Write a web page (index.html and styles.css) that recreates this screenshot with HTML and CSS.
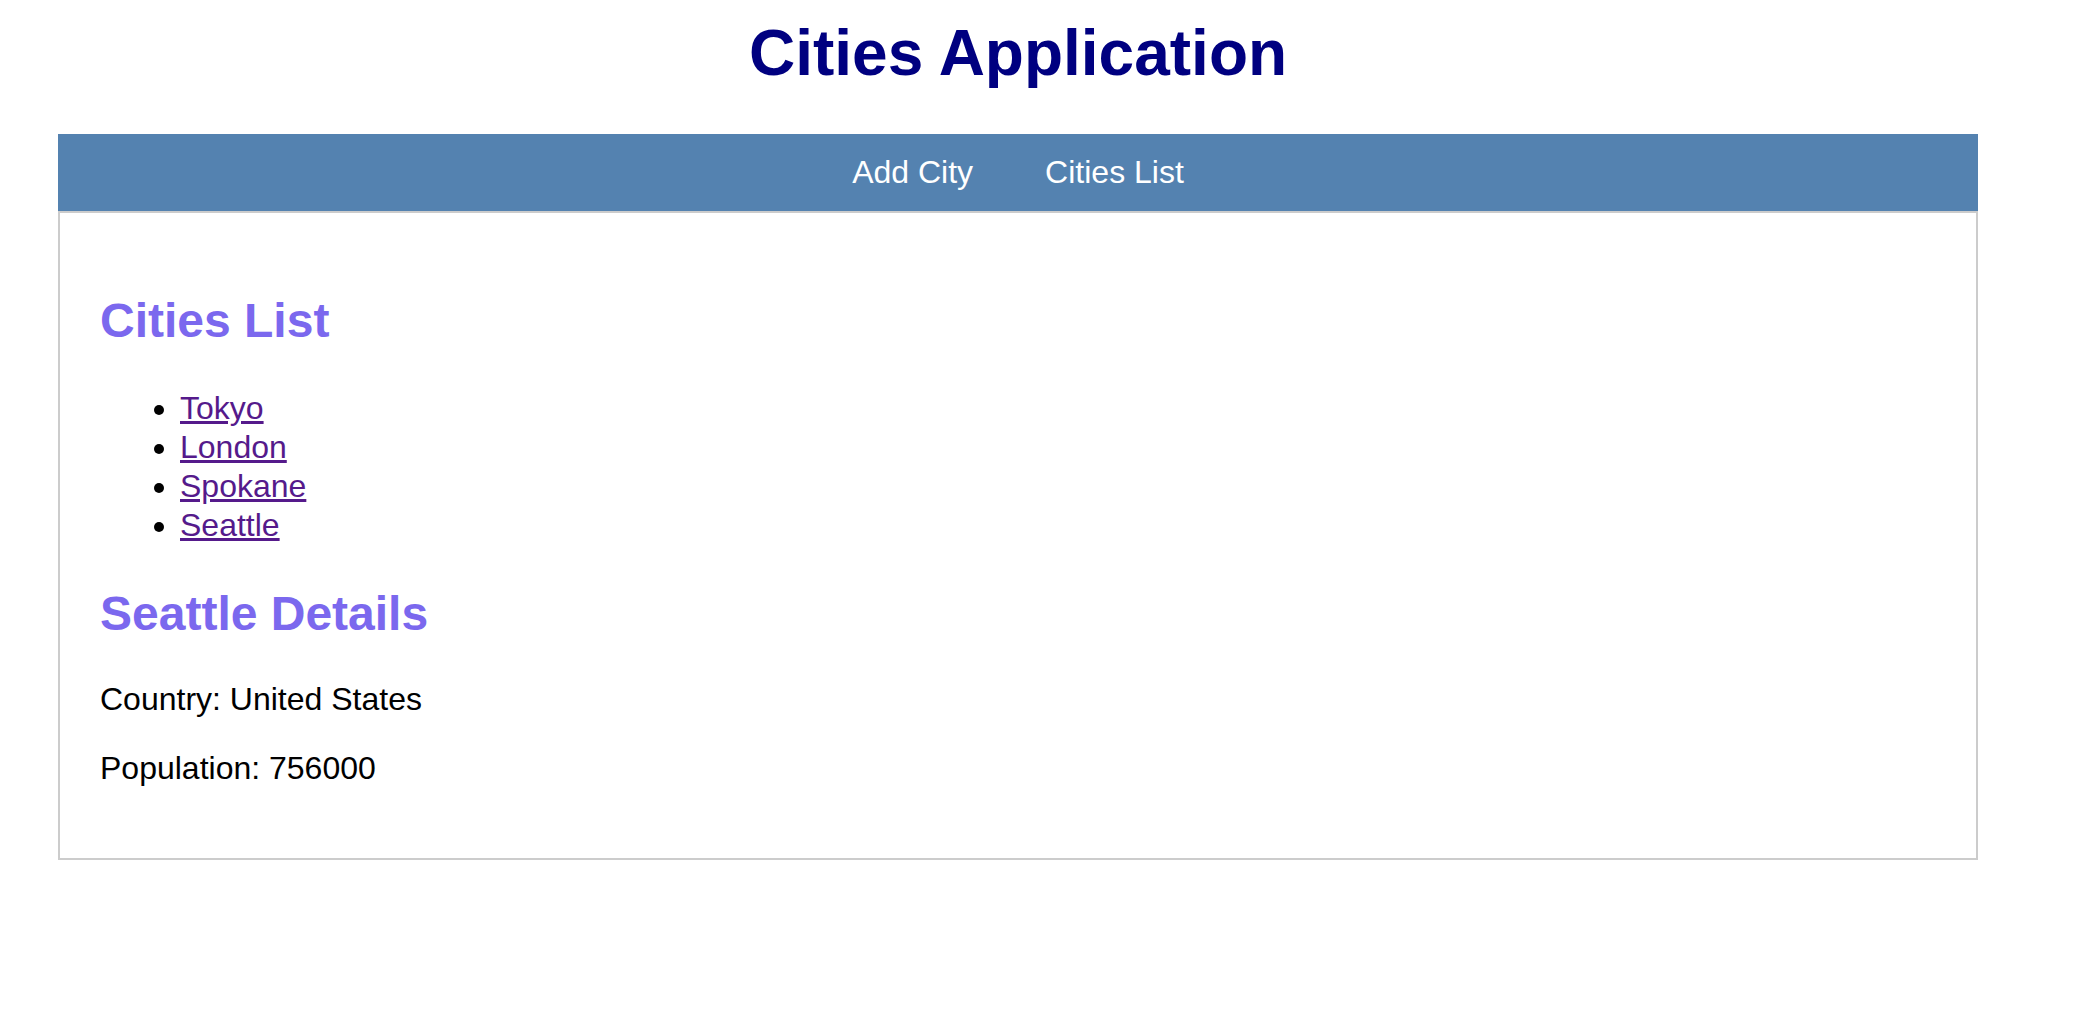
FILE: index.html
```html
<!DOCTYPE html>
<html lang="en">
<head>
<meta charset="utf-8">
<title>Cities Application</title>
<link rel="stylesheet" href="styles.css">
</head>
<body>
<div class="app">
  <h1 class="app-title">Cities Application</h1>
  <nav class="nav">
    <a class="nav-link" href="#">Add City</a>
    <a class="nav-link" href="#">Cities List</a>
  </nav>
  <main class="panel">
    <h2 class="section-title">Cities List</h2>
    <ul class="city-list">
      <li class="city-item"><a class="city-link" href="#">Tokyo</a></li>
      <li class="city-item"><a class="city-link" href="#">London</a></li>
      <li class="city-item"><a class="city-link" href="#">Spokane</a></li>
      <li class="city-item"><a class="city-link" href="#">Seattle</a></li>
    </ul>
    <h2 class="section-title details-title">Seattle Details</h2>
    <p class="detail">Country: United States</p>
    <p class="detail">Population: 756000</p>
  </main>
</div>
</body>
</html>
```
FILE: styles.css
```css
html, body {
  background: #ffffff;
}
body {
  margin: 0;
  font-family: "Liberation Sans", Arial, sans-serif;
  font-size: 32px;
  line-height: 1.2;
  color: #000000;
}
.app {
  width: 1920px;
  margin-left: 58px;
}
.app-title {
  margin: 15px 0 42.5px;
  font-size: 64px;
  font-weight: bold;
  color: #000080;
  text-align: center;
}
.nav {
  display: flex;
  justify-content: center;
  padding: 19px 0;
  background: #5482b0;
}
.nav-link {
  padding: 0 36px;
  color: #ffffff;
  text-decoration: none;
}
.panel {
  display: block;
  box-sizing: border-box;
  width: 1920px;
  border: 2px solid #cccccc;
  padding: 39px 39px 40px 40px;
}
.section-title {
  margin: 39.84px 0;
  font-size: 48px;
  font-weight: bold;
  color: #7b68ee;
}
.details-title {
  margin-bottom: 38px;
}
.city-list {
  margin: 32px 0;
  padding-left: 80px;
}
.city-item {
  line-height: 39px;
}
.city-link {
  color: #551a8b;
  text-decoration: underline;
}
.detail {
  margin: 30.5px 0;
}
```
